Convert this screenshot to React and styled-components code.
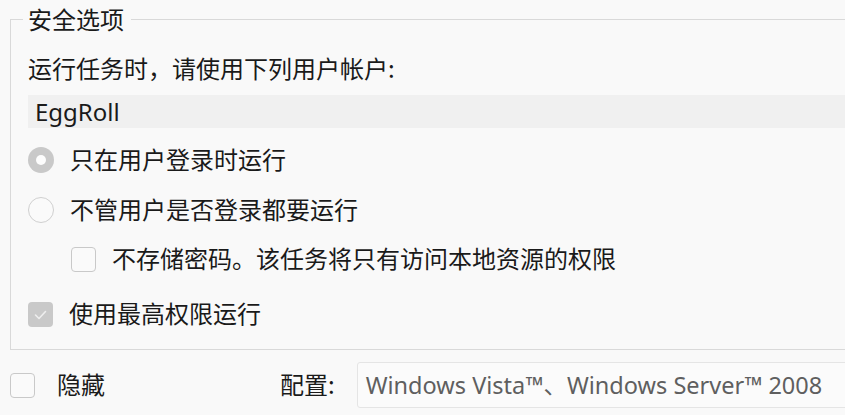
import React from 'react';
import styled, { createGlobalStyle } from 'styled-components';

const GlobalStyle = createGlobalStyle`
  html, body {
    margin: 0;
    padding: 0;
    overflow: hidden;
    background: #f9f9f9;
  }
  body {
    font-family: "Noto Sans", "Noto Sans CJK SC", sans-serif;
    color: #1a1a1a;
  }
`;

const Page = styled.div`
  padding-left: 10px;
  width: 845px;
  height: 415px;
  box-sizing: border-box;
`;

const Group = styled.fieldset`
  margin: 5px -40px 0 0;
  padding: 0 0 10px 17px;
  border: 1px solid #d9d9d9;
  border-right: none;
  min-width: 0;
`;

const Legend = styled.legend`
  margin-left: -5px;
  padding: 0 7px 0 5px;
  font-size: 24px;
  line-height: 28px;
  font-family: "Noto Sans CJK SC", sans-serif;
`;

const Label = styled.div`
  display: flex;
  align-items: center;
  height: 40px;
  margin-top: 17px;
  padding-bottom: 5px;
  box-sizing: border-box;
  font-size: 24px;
  font-family: "Noto Sans CJK SC", sans-serif;
`;

const Account = styled.div`
  display: flex;
  align-items: center;
  height: 33px;
  margin-top: 5px;
  padding-left: 7px;
  background: #f0f0f0;
  font-size: 24px;
`;

const Option = styled.label`
  display: flex;
  align-items: center;
  gap: 16px;
  height: ${(p) => p.$height || 50}px;
  margin-top: ${(p) => p.$top || 0}px;
  padding-left: ${(p) => p.$indent || 0}px;
  font-size: 24px;
  font-family: "Noto Sans CJK SC", sans-serif;
`;

const Text = styled.span`
  padding-bottom: 4px;
`;

const RadioMark = styled.span`
  box-sizing: border-box;
  width: 26px;
  height: 26px;
  border-radius: 50%;
  flex: none;
  display: flex;
  align-items: center;
  justify-content: center;
  background: ${(p) => (p.$checked ? '#c9c9c9' : '#fafafa')};
  border: ${(p) => (p.$checked ? 'none' : '1.5px solid #d0d0d0')};

  &::after {
    content: '';
    display: ${(p) => (p.$checked ? 'block' : 'none')};
    width: 10px;
    height: 10px;
    border-radius: 50%;
    background: #fdfdfd;
  }
`;

const BoxMark = styled.span`
  box-sizing: border-box;
  width: 25px;
  height: 25px;
  border-radius: 4px;
  flex: none;
  display: flex;
  align-items: center;
  justify-content: center;
  background: ${(p) => (p.$checked ? '#c9c9c9' : '#fafafa')};
  border: ${(p) => (p.$checked ? 'none' : '1.5px solid #c9c9c9')};
`;

const Footer = styled.div`
  display: flex;
  align-items: center;
  height: 46px;
  margin-top: 12px;
  margin-right: -40px;
  font-size: 24px;
  font-family: "Noto Sans CJK SC", sans-serif;
`;

const HideOption = styled.label`
  display: flex;
  align-items: center;
  gap: 22px;
  width: 270px;
`;

const ConfigLabel = styled.span`
  margin-right: 22px;
  padding-bottom: 4px;
`;

const ConfigBox = styled.div`
  flex: 1;
  box-sizing: border-box;
  height: 46px;
  display: flex;
  align-items: center;
  padding: 0 0 2px 8px;
  border: 1px solid #e5e5e5;
  border-radius: 3px;
  background: #fbfbfb;
  color: #5f5f5f;
  font-size: 23.5px;
  font-family: "Noto Sans", "Noto Sans CJK SC", sans-serif;
`;

const Check = ({ checked }) => (
  <BoxMark $checked={checked}>
    {checked && (
      <svg width="25" height="25" viewBox="0 0 25 25">
        <path d="M7.5 13 L11 16.5 L17.5 9.5" fill="none" stroke="#eeeeee" strokeWidth="1.6" strokeLinecap="round" strokeLinejoin="round" />
      </svg>
    )}
  </BoxMark>
);

export default function App() {
  return (
    <>
      <GlobalStyle />
      <Page>
        <Group>
          <Legend>安全选项</Legend>
          <Label>运行任务时，请使用下列用户帐户:</Label>
          <Account>EggRoll</Account>
          <Option $top={7}>
            <RadioMark $checked />
            <Text>只在用户登录时运行</Text>
          </Option>
          <Option>
            <RadioMark />
            <Text>不管用户是否登录都要运行</Text>
          </Option>
          <Option $indent={43} $height={49}>
            <Check />
            <Text>不存储密码。该任务将只有访问本地资源的权限</Text>
          </Option>
          <Option $top={5}>
            <Check checked />
            <Text>使用最高权限运行</Text>
          </Option>
        </Group>
        <Footer>
          <HideOption>
            <Check />
            <Text>隐藏</Text>
          </HideOption>
          <ConfigLabel>配置:</ConfigLabel>
          <ConfigBox>Windows Vista™、Windows Server™ 2008</ConfigBox>
        </Footer>
      </Page>
    </>
  );
}
